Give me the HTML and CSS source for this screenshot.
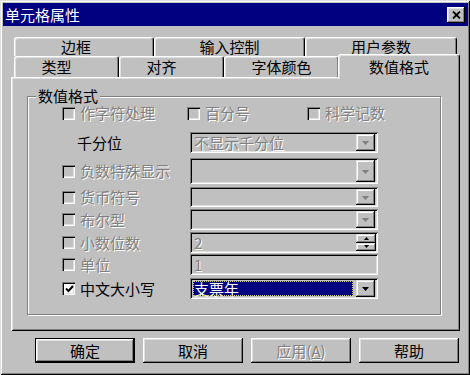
FILE: index.html
```html
<!DOCTYPE html>
<html lang="zh-CN">
<head>
<meta charset="utf-8">
<title>单元格属性</title>
<link rel="stylesheet" href="styles.css">
</head>
<body>
<div class="window">
  <div class="titlebar">
    <span class="title">单元格属性</span>
    <span class="close"><svg width="9" height="8" viewBox="0 0 9 8"><path d="M1 0.5 L8 7.5 M8 0.5 L1 7.5" stroke="#000" stroke-width="1.8" fill="none"/></svg></span>
  </div>
  <div class="content">
    <div class="tabs">
      <div class="tabrow back">
        <div class="tab w-border shift8">边框</div>
        <div class="tab w-input">输入控制</div>
        <div class="tab w-user">用户参数</div>
      </div>
      <div class="tabrow front">
        <div class="tab w-type shift10">类型</div>
        <div class="tab w-align shift10">对齐</div>
        <div class="tab w-font">字体颜色</div>
        <div class="tab active">数值格式</div>
      </div>
      <div class="panel">
        <div class="group">
          <span class="group-label">数值格式</span>
          <div class="optrow">
            <label class="opt opt1"><span class="cb"></span><span class="dis">作字符处理</span></label>
            <label class="opt opt2"><span class="cb"></span><span class="dis">百分号</span></label>
            <label class="opt"><span class="cb"></span><span class="dis">科学记数</span></label>
          </div>
          <div class="frow r-thou">
            <span class="lab plain">千分位</span>
            <div class="combo"><span class="val dis">不显示千分位</span><span class="btn"><svg class="arr" width="7" height="4" viewBox="0 0 7 4"><path d="M0 0h7L3.5 4z" fill="#808080"/></svg></span></div>
          </div>
          <div class="frow r-neg">
            <label class="lab"><span class="cb"></span><span class="dis">负数特殊显示</span></label>
            <div class="combo"><span class="val"></span><span class="btn"><svg class="arr" width="7" height="4" viewBox="0 0 7 4"><path d="M0 0h7L3.5 4z" fill="#808080"/></svg></span></div>
          </div>
          <div class="frow r-cur">
            <label class="lab"><span class="cb"></span><span class="dis">货币符号</span></label>
            <div class="combo"><span class="val"></span><span class="btn"><svg class="arr" width="7" height="4" viewBox="0 0 7 4"><path d="M0 0h7L3.5 4z" fill="#808080"/></svg></span></div>
          </div>
          <div class="frow r-bool">
            <label class="lab"><span class="cb"></span><span class="dis">布尔型</span></label>
            <div class="combo"><span class="val"></span><span class="btn"><svg class="arr" width="7" height="4" viewBox="0 0 7 4"><path d="M0 0h7L3.5 4z" fill="#808080"/></svg></span></div>
          </div>
          <div class="frow r-dec">
            <label class="lab"><span class="cb"></span><span class="dis">小数位数</span></label>
            <div class="combo"><span class="val dis">2</span><span class="spin"><span class="sbtn"><svg width="5" height="3" viewBox="0 0 5 3"><path d="M2.5 0L5 3H0z" fill="#000"/></svg></span><span class="sbtn"><svg width="5" height="3" viewBox="0 0 5 3"><path d="M0 0h5L2.5 3z" fill="#000"/></svg></span></span></div>
          </div>
          <div class="frow r-unit">
            <label class="lab"><span class="cb"></span><span class="dis">单位</span></label>
            <div class="combo field"><span class="val dis">1</span></div>
          </div>
          <div class="frow r-cn">
            <label class="lab"><span class="cb on"><svg width="9" height="8" viewBox="0 0 9 8"><path d="M1 3.5 L3.5 6 L8 1" stroke="#000" stroke-width="2" fill="none"/></svg></span><span>中文大小写</span></label>
            <div class="combo on"><span class="val sel">支票年</span><span class="btn"><svg class="arr" width="7" height="4" viewBox="0 0 7 4"><path d="M0 0h7L3.5 4z" fill="#000"/></svg></span></div>
          </div>
        </div>
      </div>
    </div>
    <div class="buttons">
      <span class="button default">确定</span>
      <span class="button">取消</span>
      <span class="button dis">应用(<u>A</u>)</span>
      <span class="button">帮助</span>
    </div>
  </div>
</div>
</body>
</html>
```

FILE: styles.css
```css
* { box-sizing: border-box; }
html, body { margin: 0; padding: 0; }
body {
  width: 470px;
  height: 375px;
  overflow: hidden;
  background: #c0c0c0;
  font-family: "Noto Sans CJK SC", "DejaVu Sans", sans-serif;
  font-size: 15px;
  line-height: 16px;
  color: #000;
}
.window {
  width: 470px;
  height: 375px;
  padding: 3px 2px 3px 3px;
  background: #c0c0c0;
  box-shadow: inset 1px 1px 0 #dfdfdf, inset -1px -1px 0 #000, inset 2px 2px 0 #fff, inset -2px -2px 0 #808080;
  display: flex;
  flex-direction: column;
}
.titlebar {
  height: 23px;
  background: #000080;
  display: flex;
  align-items: center;
  justify-content: space-between;
  padding: 0 3px 0 2px;
}
.title { color: #fff; font-size: 15px; }
.close {
  width: 18px;
  height: 16px;
  background: #c0c0c0;
  box-shadow: inset -1px -1px 0 #000, inset 1px 1px 0 #fff, inset -2px -2px 0 #808080, inset 2px 2px 0 #dfdfdf;
  display: flex;
  align-items: center;
  justify-content: center;
}
.content { padding: 11px 0 0 8px; }
.tabs { width: 449px; }
.tabrow { display: flex; align-items: flex-start; padding-left: 3px; }
.tabrow.back { height: 19px; }
.tabrow.front { height: 21px; }
.tab {
  background: #c0c0c0;
  border-top: 1px solid #fff;
  border-left: 1px solid #fff;
  border-right: 1px solid #000;
  border-radius: 3px 3px 0 0;
  box-shadow: inset -1px 0 0 #808080, inset 1px 1px 0 #dfdfdf;
  text-align: center;
  flex: none;
}
.back .tab { height: 19px; padding-top: 1px; }
.front .tab { height: 21px; padding-top: 2px; }
.w-border { width: 140px; }
.w-input { width: 151px; }
.w-user { width: 152px; }
.w-type { width: 105px; }
.w-align { width: 105px; }
.w-font { width: 115px; }
.shift8 { padding-right: 16px; }
.shift10 { padding-right: 20px; }
.front .tab.active {
  width: 122px;
  height: 25px;
  margin: -2px 0 0 -1px;
  padding-top: 4px;
  position: relative;
  z-index: 1;
}
.panel {
  width: 449px;
  height: 254px;
  padding: 19px 19px 0 16px;
  box-shadow: inset 1px 1px 0 #fff, inset -1px -1px 0 #000, inset 2px 2px 0 #dfdfdf, inset -2px -2px 0 #808080;
}
.group {
  position: relative;
  width: 414px;
  height: 219px;
  border: 1px solid #808080;
  box-shadow: 1px 1px 0 #fff, inset 1px 1px 0 #fff;
  padding: 8px 0 0 34px;
}
.group-label {
  position: absolute;
  top: -9px;
  left: 8px;
  padding: 0 2px;
  background: #c0c0c0;
}
.optrow { display: flex; align-items: center; height: 16px; }
.opt { display: flex; align-items: center; }
.opt1 { width: 125px; }
.opt2 { width: 120px; }
.cb {
  width: 13px;
  height: 13px;
  flex: none;
  margin-right: 5px;
  background: #c0c0c0;
  box-shadow: inset 1px 1px 0 #808080, inset 2px 2px 0 #000, inset -1px -1px 0 #fff, inset -2px -2px 0 #dfdfdf;
  display: flex;
  align-items: center;
  justify-content: center;
  padding: 1px 0 0 1px;
}
.cb.on { background: #fff; }
.dis { color: #808080; text-shadow: 1px 1px 0 #fff; }
.frow { display: flex; align-items: center; height: 21px; }
.r-thou { margin-top: 11px; }
.r-neg { margin-top: 5px; height: 26px; }
.r-cur { margin-top: 3px; height: 20px; }
.r-bool { margin-top: 2px; }
.r-dec { margin-top: 2px; }
.r-unit { margin-top: 1px; }
.r-cn { margin-top: 3px; }
.lab { width: 128px; flex: none; display: flex; align-items: center; }
.lab.plain { padding-left: 15px; }
.combo {
  width: 188px;
  height: 100%;
  display: flex;
  padding: 2px;
  background: #c0c0c0;
  box-shadow: inset 1px 1px 0 #808080, inset -1px -1px 0 #fff, inset 2px 2px 0 #000, inset -2px -2px 0 #dfdfdf;
}
.val { flex: 1; padding-left: 2px; display: flex; align-items: center; }
.btn {
  width: 19px;
  flex: none;
  margin-right: 1px;
  background: #c0c0c0;
  box-shadow: inset -1px -1px 0 #000, inset 1px 1px 0 #dfdfdf, inset -2px -2px 0 #808080, inset 2px 2px 0 #fff;
  display: flex;
  align-items: center;
  justify-content: center;
}
.arr { margin: 1px 0 0 -1px; }
.spin { width: 20px; flex: none; display: flex; flex-direction: column; }
.sbtn {
  flex: 1;
  background: #c0c0c0;
  box-shadow: inset -1px -1px 0 #000, inset 1px 1px 0 #dfdfdf, inset -2px -2px 0 #808080, inset 2px 2px 0 #fff;
  display: flex;
  align-items: center;
  justify-content: center;
}
.val.sel {
  margin: 1px 3px 1px 1px;
  background: #000080;
  color: #fff;
  outline: 1px dotted #d0d080;
  outline-offset: -1px;
  padding-left: 1px;
}
.buttons { display: flex; gap: 8px; margin-top: 7px; padding-left: 24px; }
.button {
  width: 100px;
  height: 25px;
  display: flex;
  align-items: center;
  justify-content: center;
  background: #c0c0c0;
  box-shadow: inset -1px -1px 0 #000, inset 1px 1px 0 #fff, inset -2px -2px 0 #808080, inset 2px 2px 0 #dfdfdf;
}
.button.default {
  box-shadow: inset 0 0 0 1px #000, inset -2px -2px 0 #000, inset 2px 2px 0 #fff, inset -3px -3px 0 #808080, inset 3px 3px 0 #dfdfdf;
}
.button u { text-decoration: underline; }
```
